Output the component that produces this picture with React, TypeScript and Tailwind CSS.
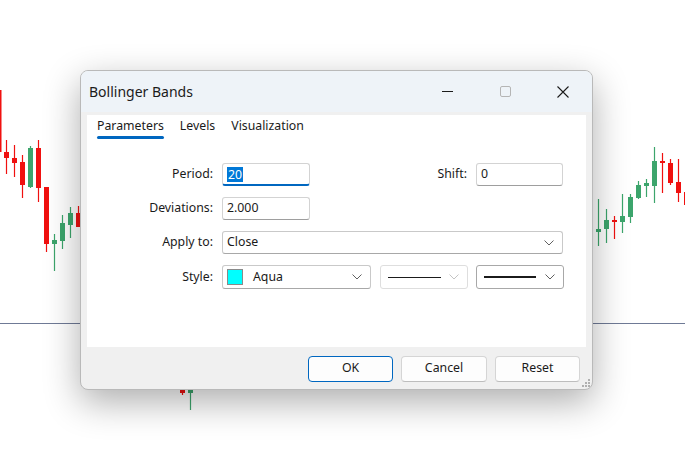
type Candle = { cx: number; wt: number; wb: number; bt: number; bb: number; up: boolean };

const candles: Candle[] = [
  { cx: -1, wt: 88, wb: 152, bt: 90, bb: 152, up: false },
  { cx: 6.5, wt: 140, wb: 174, bt: 152, bb: 158, up: false },
  { cx: 14.5, wt: 145, wb: 177, bt: 158, bb: 163, up: false },
  { cx: 22.5, wt: 155, wb: 198, bt: 162, bb: 185, up: false },
  { cx: 30.5, wt: 146, wb: 188, bt: 148, bb: 187, up: true },
  { cx: 38.5, wt: 140, wb: 202, bt: 148, bb: 188, up: false },
  { cx: 46.5, wt: 187, wb: 252, bt: 187, bb: 244, up: false },
  { cx: 54.5, wt: 234, wb: 271, bt: 240, bb: 244, up: true },
  { cx: 62.5, wt: 215, wb: 249, bt: 223, bb: 241, up: true },
  { cx: 70.5, wt: 207, wb: 238, bt: 213, bb: 225, up: true },
  { cx: 78.5, wt: 206, wb: 227, bt: 213, bb: 227, up: false },
  { cx: 182.5, wt: 380, wb: 395, bt: 380, bb: 393, up: false },
  { cx: 190.5, wt: 380, wb: 410, bt: 380, bb: 393, up: true },
  { cx: 590.5, wt: 230, wb: 287, bt: 240, bb: 260, up: true },
  { cx: 598.5, wt: 199, wb: 246, bt: 229, bb: 232, up: true },
  { cx: 606.5, wt: 209, wb: 243, bt: 220, bb: 229, up: true },
  { cx: 614.5, wt: 216, wb: 239, bt: 220, bb: 222, up: false },
  { cx: 622.5, wt: 194, wb: 233, bt: 216, bb: 222, up: true },
  { cx: 630.5, wt: 194, wb: 223, bt: 197, bb: 217, up: true },
  { cx: 638.5, wt: 181, wb: 199, bt: 185, bb: 198, up: true },
  { cx: 646.5, wt: 179, wb: 197, bt: 183, bb: 186, up: true },
  { cx: 654.5, wt: 147, wb: 203, bt: 161, bb: 186, up: true },
  { cx: 662.5, wt: 153, wb: 193, bt: 161, bb: 163, up: false },
  { cx: 670.5, wt: 159, wb: 185, bt: 163, bb: 183, up: false },
  { cx: 678.5, wt: 159, wb: 202, bt: 182, bb: 193, up: false },
  { cx: 686.5, wt: 190, wb: 207, bt: 192, bb: 205, up: false },
];

function Chart() {
  return (
    <svg className="absolute inset-0" width="685" height="454" viewBox="0 0 685 454">
      <line x1="0" y1="323.5" x2="685" y2="323.5" stroke="#6f7a96" strokeWidth="1" />
      {candles.map((c, i) => {
        const col = c.up ? "#3ca56c" : "#f0100f";
        return (
          <g key={i}>
            <line x1={c.cx} y1={c.wt} x2={c.cx} y2={c.wb} stroke={col} strokeWidth="1.2" />
            <rect x={c.cx - 2.5} y={c.bt} width="5" height={c.bb - c.bt} fill={col} />
          </g>
        );
      })}
    </svg>
  );
}

function Chevron({ muted = false }: { muted?: boolean }) {
  return (
    <svg width="10" height="6" viewBox="0 0 10 6" className="shrink-0">
      <path d="M0.5 0.5 L5 5 L9.5 0.5" fill="none" stroke={muted ? "#c4c4c4" : "#606060"} strokeWidth="1" />
    </svg>
  );
}

function TextBox({ value, focused = false, width }: { value: string; focused?: boolean; width: string }) {
  return (
    <div
      className={`${width} h-[23px] flex items-center rounded-[3px] border border-[#d3d3d3] bg-white px-[4px] ${
        focused ? "border-b-2 border-b-[#0067c0]" : "border-b-[#9e9e9e]"
      }`}
    >
      {focused ? (
        <span className="bg-[#0078d7] px-[1px] text-white leading-[15px]">{value}</span>
      ) : (
        <span>{value}</span>
      )}
    </div>
  );
}

function Label({ children }: { children: string }) {
  return <div className="w-[135px] shrink-0 pr-[9px] text-right">{children}</div>;
}

export default function App() {
  return (
    <div className="relative h-[454px] w-[685px] overflow-hidden bg-white font-['Noto_Sans',sans-serif] text-[12.3px] text-[#1a1a1a]">
      <Chart />

      <div className="absolute left-[80px] top-[70px] flex h-[320px] w-[513px] flex-col overflow-hidden rounded-[8px] border border-[#b9b9b9] bg-[#f0f0f0] shadow-[0_12px_36px_rgba(0,0,0,0.32)]">
        <div className="flex h-[41px] shrink-0 items-center bg-[#eef3f8] pl-[8px]">
          <span className="text-[14px] text-[#1b1b1b]">Bollinger Bands</span>
          <div className="ml-auto flex h-full items-center">
            <div className="flex h-full w-[58px] items-center justify-center">
              <div className="h-px w-[11px] bg-[#1b1b1b]" />
            </div>
            <div className="flex h-full w-[58px] items-center justify-center">
              <div className="h-[11px] w-[11px] rounded-[2px] border border-[#b5b5b5]" />
            </div>
            <div className="flex h-full w-[58px] items-center justify-center">
              <svg width="12" height="12" viewBox="0 0 12 12">
                <path d="M0.5 0.5 L11.5 11.5 M11.5 0.5 L0.5 11.5" stroke="#1b1b1b" strokeWidth="1.1" />
              </svg>
            </div>
          </div>
        </div>

        <div className="mx-[6px] mt-[3px] flex h-[232px] shrink-0 flex-col bg-white">
          <div className="flex gap-[16px] pl-[10px] pt-[1px]">
            <div className="flex flex-col">
              <span className="leading-[20px]">Parameters</span>
              <div className="h-[3px] rounded-full bg-[#0067c0]" />
            </div>
            <span className="leading-[20px]">Levels</span>
            <span className="leading-[20px]">Visualization</span>
          </div>

          <div className="mt-[24px] flex flex-col gap-[11px]">
            <div className="flex items-center">
              <Label>Period:</Label>
              <TextBox value="20" focused width="w-[88px]" />
              <div className="ml-auto flex items-center">
                <span className="pr-[9px]">Shift:</span>
                <TextBox value="0" width="w-[87px]" />
              </div>
              <div className="w-[23px]" />
            </div>
            <div className="flex items-center">
              <Label>Deviations:</Label>
              <TextBox value="2.000" width="w-[88px]" />
            </div>
            <div className="flex items-center">
              <Label>Apply to:</Label>
              <div className="flex h-[23px] w-[341px] items-center justify-between rounded-[3px] border border-[#c9c9c9] border-b-[#a8a8a8] bg-white pl-[4px] pr-[8px]">
                <span>Close</span>
                <Chevron />
              </div>
            </div>
            <div className="flex items-center">
              <Label>Style:</Label>
              <div className="flex h-[24px] w-[149px] items-center rounded-[3px] border border-[#c9c9c9] border-b-[#a8a8a8] bg-white pl-[4px] pr-[8px]">
                <div className="h-[16px] w-[16px] border border-[#8a8a8a] bg-[#00ffff]" />
                <span className="ml-[10px]">Aqua</span>
                <div className="ml-auto">
                  <Chevron />
                </div>
              </div>
              <div className="ml-[9px] flex h-[24px] w-[88px] items-center rounded-[3px] border border-[#dedede] bg-white pl-[7px] pr-[8px]">
                <div className="h-px w-[53px] bg-[#1b1b1b]" />
                <div className="ml-auto">
                  <Chevron muted />
                </div>
              </div>
              <div className="ml-[8px] flex h-[24px] w-[88px] items-center rounded-[3px] border border-[#a8a8a8] bg-white pl-[7px] pr-[8px]">
                <div className="h-[2px] w-[52px] bg-[#1b1b1b]" />
                <div className="ml-auto">
                  <Chevron />
                </div>
              </div>
            </div>
          </div>
        </div>

        <div className="relative flex flex-1 items-center justify-end gap-[8px] pr-[12px] pt-[1px]">
          <button className="h-[26px] w-[85px] rounded-[4px] border border-[#0067c0] bg-[#fdfdfd]">OK</button>
          <button className="h-[26px] w-[86px] rounded-[4px] border border-[#d5d5d5] border-b-[#bdbdbd] bg-[#fdfdfd]">Cancel</button>
          <button className="h-[26px] w-[85px] rounded-[4px] border border-[#d5d5d5] border-b-[#bdbdbd] bg-[#fdfdfd]">Reset</button>
          <svg className="absolute bottom-[2px] right-[2px]" width="9" height="9" viewBox="0 0 9 9">
            <rect x="7" y="1" width="2" height="2" fill="#b0b0b0" />
            <rect x="4" y="4" width="2" height="2" fill="#b0b0b0" />
            <rect x="7" y="4" width="2" height="2" fill="#b0b0b0" />
            <rect x="1" y="7" width="2" height="2" fill="#b0b0b0" />
            <rect x="4" y="7" width="2" height="2" fill="#b0b0b0" />
            <rect x="7" y="7" width="2" height="2" fill="#b0b0b0" />
          </svg>
        </div>
      </div>
    </div>
  );
}
